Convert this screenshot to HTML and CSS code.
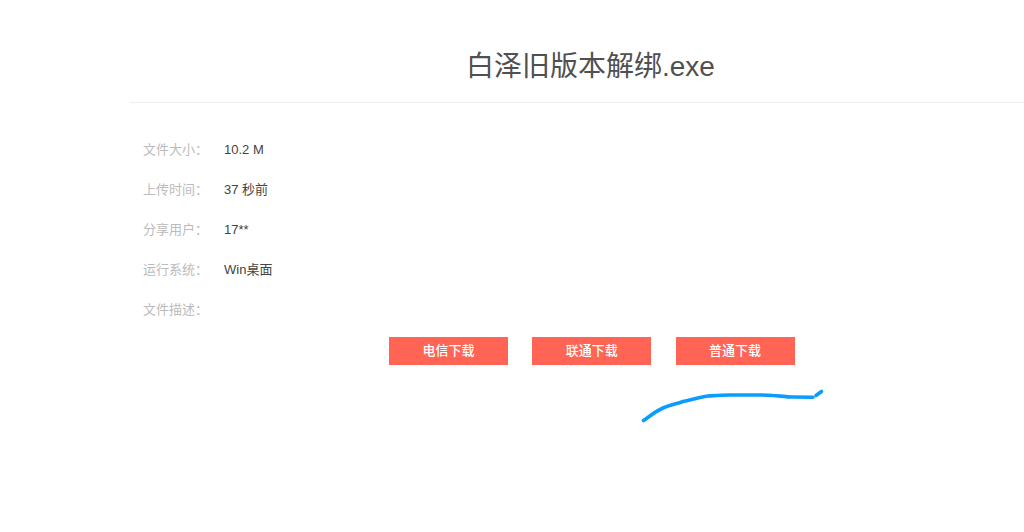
FILE: index.html
```html
<!DOCTYPE html>
<html lang="zh-CN">
<head>
<meta charset="utf-8">
<title>白泽旧版本解绑.exe</title>
<link rel="stylesheet" href="styles.css">
</head>
<body>
<main class="page">
  <header class="head"><h1 class="title">白泽旧版本解绑.exe</h1></header>
  <section class="info">
    <div class="row"><span class="label">文件大小：</span><span class="value">10.2 M</span></div>
    <div class="row"><span class="label">上传时间：</span><span class="value">37 秒前</span></div>
    <div class="row"><span class="label">分享用户：</span><span class="value">17**</span></div>
    <div class="row"><span class="label">运行系统：</span><span class="value">Win桌面</span></div>
    <div class="row"><span class="label">文件描述：</span><span class="value"></span></div>
  </section>
  <div class="actions">
    <a class="btn">电信下载</a>
    <a class="btn">联通下载</a>
    <a class="btn">普通下载</a>
  </div>
</main>
<svg class="scribble" width="1024" height="532" viewBox="0 0 1024 532" aria-hidden="true">
  <path d="M643.500 420.500 C650 416 656 411 663 408 C670 405 676 404 683 401.500 C692 399.500 700 397 708 396 C716 395.500 723 395 730 395 L758 395 C763 395 768 395 773 395.500 C780 396 786 397 793 397 L813 397.300"/>
  <path d="M816 395.500 L821.500 391.500"/>
</svg>
</body>
</html>
```
FILE: styles.css
```css
* { box-sizing: border-box; }
html, body { margin: 0; background: #fff; }
body {
  height: 532px;
  overflow: hidden;
  font-family: "Liberation Sans", "Noto Sans CJK SC", sans-serif;
  color: #444;
}
.page { margin-left: 130px; }
.head {
  height: 103px;
  padding-top: 47px;
  padding-left: 336px;
  border-bottom: 1px solid #eee;
}
.title {
  margin: 0;
  font-size: 28px;
  line-height: 40px;
  font-weight: 400;
  color: #505050;
}
.info { padding: 27px 0 0 13px; }
.row { display: flex; height: 40px; line-height: 39px; font-size: 13px; }
.label { width: 81px; color: #bbb; }
.value { color: #444; }
.actions {
  display: flex;
  gap: 24.300px;
  padding: 7px 0 0 259px;
}
.btn {
  width: 119px;
  height: 28px;
  line-height: 28px;
  text-align: center;
  font-size: 13px;
  font-weight: 500;
  color: #fff;
  background: #ff6454;
}
.scribble { position: absolute; left: 0; top: 0; pointer-events: none; }
.scribble path {
  fill: none;
  stroke: #0a9dfb;
  stroke-width: 3.600;
  stroke-linecap: round;
  stroke-linejoin: round;
}
```
